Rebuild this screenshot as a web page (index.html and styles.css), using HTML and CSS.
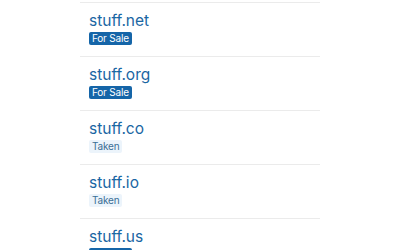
FILE: index.html
```html
<!DOCTYPE html>
<html>
<head>
<meta charset="utf-8">
<link rel="stylesheet" href="styles.css">
</head>
<body>
<ul class="list">
  <li class="row"><a class="name">stuff.net</a><span class="badge sale">For Sale</span></li>
  <li class="row"><a class="name">stuff.org</a><span class="badge sale">For Sale</span></li>
  <li class="row"><a class="name">stuff.co</a><span class="badge taken">Taken</span></li>
  <li class="row"><a class="name">stuff.io</a><span class="badge taken">Taken</span></li>
  <li class="row"><a class="name">stuff.us</a><span class="badge sale">For Sale</span></li>
</ul>
</body>
</html>
```
FILE: styles.css
```css
html, body { margin: 0; padding: 0; background: #fff; }
body { font-family: Inter, "Noto Sans", sans-serif; }
.list {
  list-style: none;
  margin: 2px 0 0 80px;
  padding: 0;
  width: 240px;
}
.row {
  border-top: 1px solid #ebebeb;
  padding: 9px 9px 10px;
  height: 34px;
  display: flex;
  flex-direction: column;
  align-items: flex-start;
}
.name {
  color: #1a66a3;
  font-size: 15.5px;
  line-height: 18px;
}
.badge {
  margin-top: 2px;
  font-size: 10px;
  line-height: 13px;
  letter-spacing: -0.2px;
  padding: 0 3px;
  border-radius: 2px;
}
.sale { background: #1565a8; color: #fff; }
.taken { background: #ecf4fb; color: #3a6f96; }
```
